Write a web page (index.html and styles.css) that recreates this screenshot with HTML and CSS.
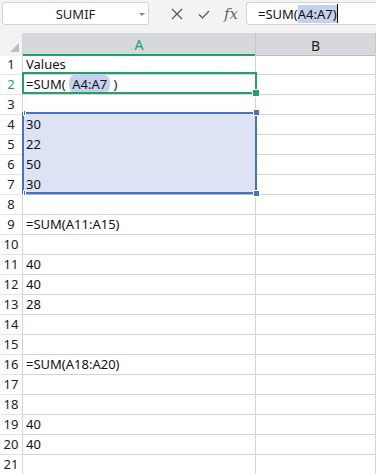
FILE: index.html
```html
<!DOCTYPE html>
<html lang="en">
<head>
    <meta charset="UTF-8">
    <meta name="viewport" content="width=device-width, initial-scale=1.0">
    <title>SUMIF</title>
    <link rel="stylesheet" href="styles.css">
</head>
<body>
    <div class="formula-bar">
        <div class="name-box">
            <span>SUMIF</span>
            <span class="caret"></span>
        </div>
        <div class="bar-icons">
            <svg width="14" height="14" viewBox="0 0 14 14"><path d="M2 2 L12 12 M12 2 L2 12" stroke="#555" stroke-width="1.2" fill="none"/></svg>
            <svg width="14" height="14" viewBox="0 0 14 14"><path d="M2 7.5 L5.5 11 L12 4" stroke="#555" stroke-width="1.2" fill="none"/></svg>
            <span class="fx">fx</span>
        </div>
        <div class="formula-input">=SUM(<span class="ref">A4:A7)</span><span class="cursor"></span></div>
    </div>

    <div class="sheet">
        <div class="col-headers">
            <div class="corner"><span class="corner-tri"></span></div>
            <div class="col-head active">A</div>
            <div class="col-head">B</div>
        </div>

        <div class="rows">
            <div class="row"><div class="num">1</div><div class="cell">Values</div><div class="cell"></div></div>
            <div class="row"><div class="num active">2</div><div class="cell">=SUM( <span class="ref">A4:A7</span> )</div><div class="cell"></div></div>
            <div class="row"><div class="num">3</div><div class="cell"></div><div class="cell"></div></div>
            <div class="row"><div class="num">4</div><div class="cell sel">30</div><div class="cell"></div></div>
            <div class="row"><div class="num">5</div><div class="cell sel">22</div><div class="cell"></div></div>
            <div class="row"><div class="num">6</div><div class="cell sel">50</div><div class="cell"></div></div>
            <div class="row"><div class="num">7</div><div class="cell sel">30</div><div class="cell"></div></div>
            <div class="row"><div class="num">8</div><div class="cell"></div><div class="cell"></div></div>
            <div class="row"><div class="num">9</div><div class="cell">=SUM(A11:A15)</div><div class="cell"></div></div>
            <div class="row"><div class="num">10</div><div class="cell"></div><div class="cell"></div></div>
            <div class="row"><div class="num">11</div><div class="cell">40</div><div class="cell"></div></div>
            <div class="row"><div class="num">12</div><div class="cell">40</div><div class="cell"></div></div>
            <div class="row"><div class="num">13</div><div class="cell">28</div><div class="cell"></div></div>
            <div class="row"><div class="num">14</div><div class="cell"></div><div class="cell"></div></div>
            <div class="row"><div class="num">15</div><div class="cell"></div><div class="cell"></div></div>
            <div class="row"><div class="num">16</div><div class="cell">=SUM(A18:A20)</div><div class="cell"></div></div>
            <div class="row"><div class="num">17</div><div class="cell"></div><div class="cell"></div></div>
            <div class="row"><div class="num">18</div><div class="cell"></div><div class="cell"></div></div>
            <div class="row"><div class="num">19</div><div class="cell">40</div><div class="cell"></div></div>
            <div class="row"><div class="num">20</div><div class="cell">40</div><div class="cell"></div></div>
            <div class="row"><div class="num">21</div><div class="cell"></div><div class="cell"></div></div>

            <!-- overlays: active cell A2 and referenced range A4:A7 -->
            <div class="active-cell"><span class="fill-handle"></span></div>
            <div class="range">
                <span class="handle tl"></span>
                <span class="handle bl"></span>
                <span class="handle tr"></span>
                <span class="handle br"></span>
            </div>
        </div>
    </div>
</body>
</html>
```

FILE: styles.css
```css
:root {
    --bar-bg: #f3f3f3;
    --head-bg: #d6d8dc;
    --grid: #d0d4dc;
    --green: #21a366;
    --blue: #4472c4;
    --sel-bg: #dde3f4;
    --sel-grid: #aab5d3;
    --ref-bg: #c5d1ee;
    --text: #111;
}

* {
    box-sizing: border-box;
    margin: 0;
    padding: 0;
}

body {
    width: 376px;
    height: 474px;
    overflow: hidden;
    background: #fff;
    color: var(--text);
    font-family: "Noto Sans", "Open Sans", sans-serif;
    font-size: 13px;
}

.formula-bar {
    height: 33px;
    background: var(--bar-bg);
    display: flex;
    align-items: flex-start;
    padding: 2px 0 0 2px;
}

.name-box {
    width: 147px;
    height: 23px;
    background: #fff;
    border: 1px solid #d4d4d4;
    border-radius: 3px;
    display: flex;
    align-items: center;
    justify-content: center;
    position: relative;
    font-size: 13px;
    color: #222;
}

.caret {
    position: absolute;
    right: 3px;
    top: 10px;
    border-left: 3px solid transparent;
    border-right: 3px solid transparent;
    border-top: 3px solid #888;
}

.bar-icons {
    width: 97px;
    height: 23px;
    display: flex;
    align-items: center;
    gap: 13px;
    padding-left: 21px;
}

.fx {
    font-family: "DejaVu Serif", "Liberation Serif", serif;
    font-style: italic;
    font-size: 15px;
    color: #666;
}

.formula-input {
    flex: 1;
    height: 23px;
    background: #fff;
    border: 1px solid #d4d4d4;
    border-right: none;
    border-radius: 3px 0 0 3px;
    display: flex;
    align-items: center;
    padding-left: 11px;
    font-size: 13px;
}

.formula-input .ref {
    background: var(--ref-bg);
    line-height: 18px;
}

.cursor {
    width: 1px;
    height: 19px;
    background: #000;
}

.col-headers {
    display: grid;
    grid-template-columns: 23px 233px 1fr;
    height: 20px;
}

.corner {
    background: var(--bar-bg);
    border-right: 1px solid var(--grid);
    position: relative;
}

.corner-tri {
    position: absolute;
    right: 3px;
    bottom: 4px;
    border-left: 9px solid transparent;
    border-bottom: 9px solid #bdbdbd;
}

.col-head {
    background: var(--head-bg);
    border-right: 1px solid #c4c7cc;
    border-bottom: 1px solid #b8bcc4;
    display: flex;
    align-items: center;
    justify-content: center;
    padding-top: 2px;
    font-size: 14px;
    color: #222;
}

.col-head.active {
    color: var(--green);
    border-bottom: 2px solid var(--green);
}

.rows {
    position: relative;
}

.row {
    display: grid;
    grid-template-columns: 23px 233px 1fr;
    height: 20px;
}

.num {
    border-right: 1px solid var(--grid);
    border-bottom: 1px solid #e2e4e8;
    text-align: center;
    font-size: 13px;
    padding-top: 2px;
    line-height: 19px;
    color: #222;
}

.num.active {
    color: var(--green);
}

.cell {
    border-right: 1px solid var(--grid);
    border-bottom: 1px solid var(--grid);
    padding: 2px 0 0 3px;
    line-height: 19px;
    white-space: nowrap;
}

.cell.sel {
    background: var(--sel-bg);
    border-bottom-color: var(--sel-grid);
}

.cell .ref {
    background: var(--ref-bg);
    border-radius: 8px;
    padding: 1px 3px;
}

.active-cell {
    position: absolute;
    left: 22px;
    top: 19px;
    width: 235px;
    height: 22px;
    border: 2px solid var(--green);
}

.fill-handle {
    position: absolute;
    right: -4px;
    bottom: -4px;
    width: 6px;
    height: 6px;
    background: var(--green);
    outline: 1px solid #fff;
}

.range {
    position: absolute;
    left: 22px;
    top: 59px;
    width: 235px;
    height: 82px;
    border: 2px solid var(--blue);
}

.handle {
    position: absolute;
    background: var(--blue);
    border: 1px solid #fff;
}

.handle.tr,
.handle.br {
    width: 7px;
    height: 7px;
    right: -5px;
}

.handle.tr { top: -5px; }
.handle.br { bottom: -5px; }

.handle.tl,
.handle.bl {
    width: 3px;
    height: 6px;
    left: -1px;
}

.handle.tl { top: -4px; }
.handle.bl { bottom: -4px; }
```
